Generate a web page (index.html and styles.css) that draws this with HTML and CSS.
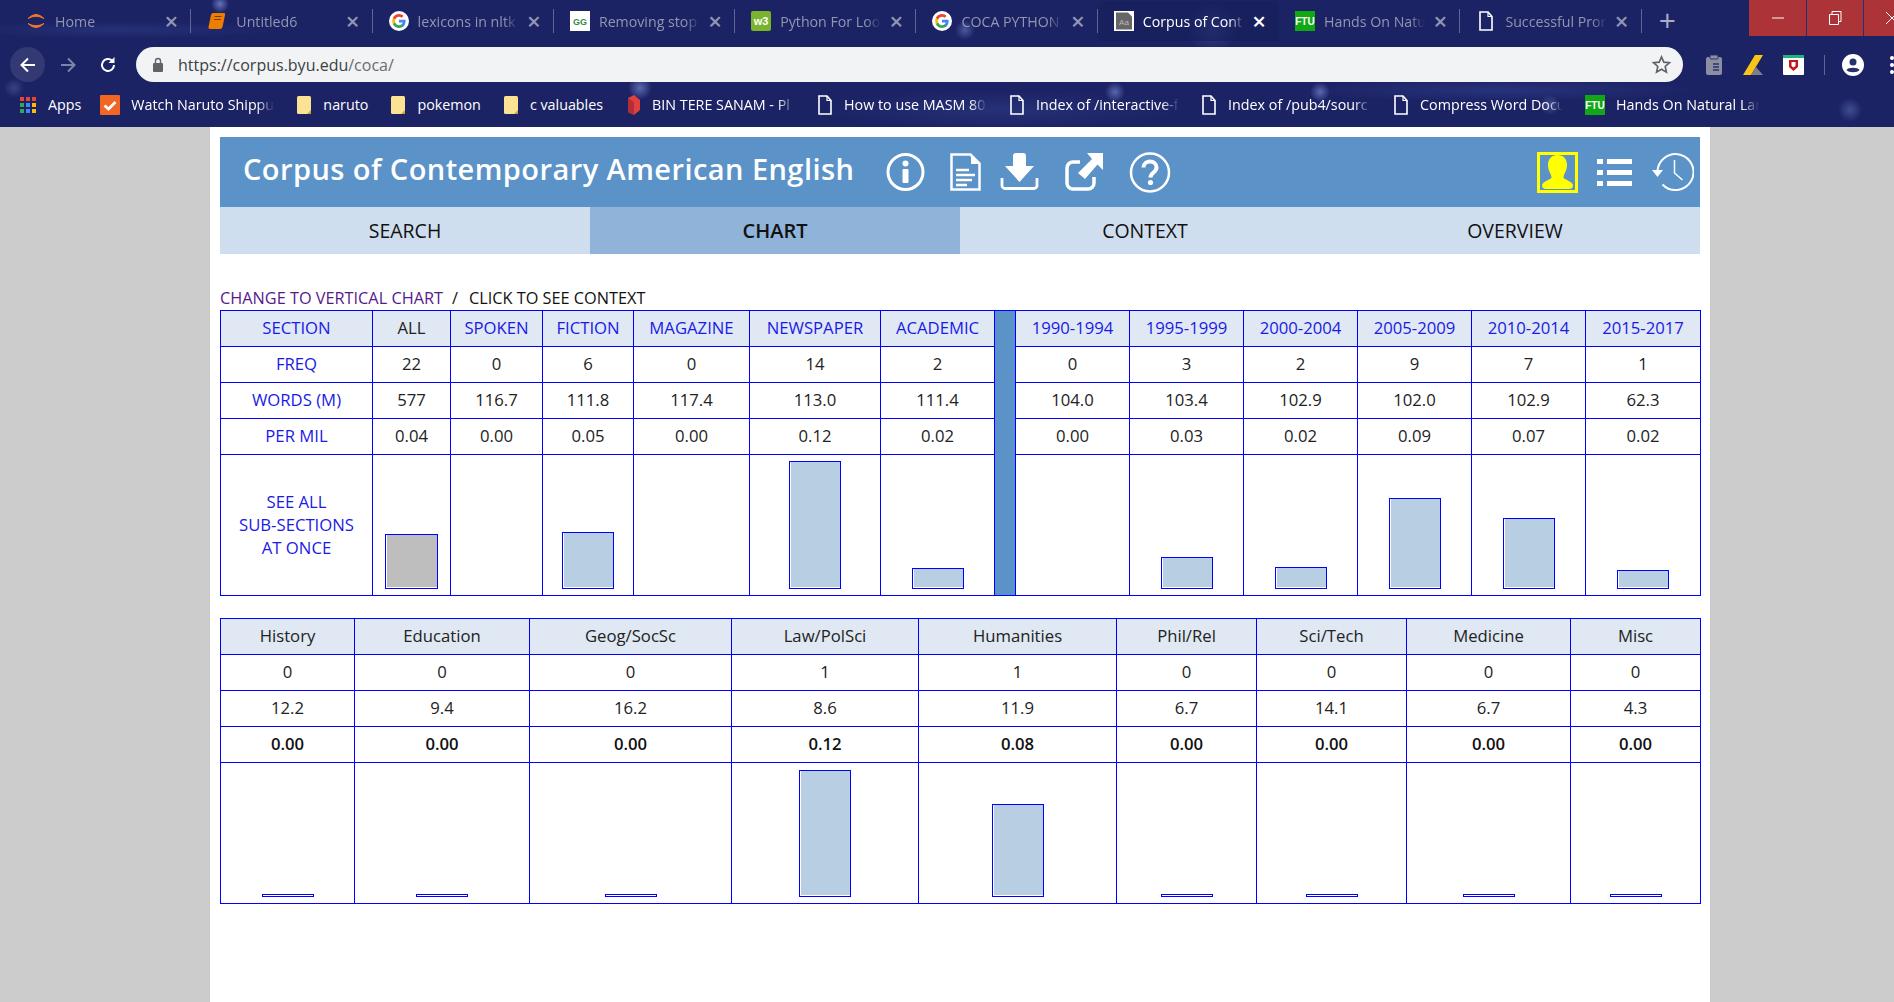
FILE: index.html
```html
<!DOCTYPE html>
<html lang="en">
<head>
    <meta charset="UTF-8">
    <title>Corpus of Contemporary American English</title>
    <link rel="stylesheet" href="styles.css">
</head>
<body>
    <svg class="defs" width="0" height="0">
        <symbol id="fav-google" viewBox="0 0 20 20">
            <circle cx="10" cy="10" r="10" fill="#fff"/>
            <path d="M16.6 10.2c0-.5 0-1-.1-1.400H10v2.700h3.700c-.2.900-.6 1.600-1.400 2.100v1.800h2.200c1.300-1.200 2.100-3 2.100-5.200z" fill="#4285f4"/>
            <path d="M10 17c1.900 0 3.400-.6 4.500-1.700l-2.200-1.700c-.6.400-1.400.7-2.300.7-1.800 0-3.300-1.200-3.800-2.800H3.900v1.800C5 15.500 7.300 17 10 17z" fill="#34a853"/>
            <path d="M6.200 11.500c-.3-.9-.3-1.900 0-2.900V6.800H3.900c-.9 1.900-.9 4.100 0 6.500z" fill="#fbbc05"/>
            <path d="M10 5.800c1 0 1.900.3 2.600 1l1.900-1.900C13.400 3.700 11.800 3 10 3 7.300 3 5 4.500 3.900 6.800l2.300 1.800C6.700 7 8.200 5.800 10 5.800z" fill="#ea4335"/>
        </symbol>
        <symbol id="fav-page" viewBox="0 0 16 20">
            <path d="M2 1h8l4 4.500V19H2z" fill="none" stroke="#fff" stroke-width="1.600"/>
            <path d="M10 1v4.500h4" fill="none" stroke="#fff" stroke-width="1.200"/>
        </symbol>
        <symbol id="fav-folder" viewBox="0 0 16 20">
            <rect x="1" y="1" width="14" height="18" rx="1.500" fill="#fde293"/>
            <path d="M11 19l4-4v4z" fill="#c9a53c"/>
        </symbol>
    </svg>

    <header class="chrome">
        <div class="tabstrip">
            <div class="tabs">
                <div class="tab">
                    <svg class="fav" viewBox="0 0 20 20"><path d="M2 7.500Q10 -.5 18 7.500Q10 3 2 7.500z" fill="#f37726" stroke="#f37726"/><path d="M2 12.500Q10 20.500 18 12.500Q10 17 2 12.500z" fill="#f37726" stroke="#f37726"/></svg>
                    <span class="tab-title">Home</span><span class="tab-x">×</span>
                </div>
                <div class="tab">
                    <svg class="fav" viewBox="0 0 20 20"><path d="M6 2h11q1.500 0 1 2l-2.500 12q-.5 2-2.500 2H3q-2 0-1.500-2L4 4q.5-2 2-2z" fill="#ef7d00"/><path d="M7.500 5.500h7M7 8.500h7" stroke="#7a3b00" stroke-width="1"/></svg>
                    <span class="tab-title">Untitled6</span><span class="tab-x">×</span>
                </div>
                <div class="tab">
                    <svg class="fav"><use href="#fav-google"/></svg>
                    <span class="tab-title">lexicons in nltk</span><span class="tab-x">×</span>
                </div>
                <div class="tab">
                    <svg class="fav" viewBox="0 0 20 20"><rect width="20" height="20" fill="#fff"/><text x="10" y="13.500" text-anchor="middle" font-family="Liberation Sans" font-size="9" font-weight="700" fill="#2f8d46">GG</text></svg>
                    <span class="tab-title">Removing stop</span><span class="tab-x">×</span>
                </div>
                <div class="tab">
                    <svg class="fav" viewBox="0 0 20 20"><rect width="20" height="20" rx="2" fill="#7cb32d"/><text x="10" y="14" text-anchor="middle" font-family="Liberation Sans" font-size="11" font-weight="700" fill="#fff">w3</text></svg>
                    <span class="tab-title">Python For Loo</span><span class="tab-x">×</span>
                </div>
                <div class="tab">
                    <svg class="fav"><use href="#fav-google"/></svg>
                    <span class="tab-title">COCA PYTHON</span><span class="tab-x">×</span>
                </div>
                <div class="tab tab-active">
                    <svg class="fav" viewBox="0 0 20 20"><rect width="20" height="20" fill="#fff"/><path d="M2 1.500h12l4 4v13H2z" fill="#666"/><text x="10" y="14" text-anchor="middle" font-family="Liberation Sans" font-size="8" fill="#bbb">Aa</text></svg>
                    <span class="tab-title">Corpus of Cont</span><span class="tab-x">×</span>
                </div>
                <div class="tab">
                    <svg class="fav" viewBox="0 0 20 20"><rect width="20" height="20" fill="#12a815"/><text x="10" y="14" text-anchor="middle" font-family="Liberation Sans" font-size="10" font-weight="700" fill="#fff">FTU</text></svg>
                    <span class="tab-title">Hands On Natu</span><span class="tab-x">×</span>
                </div>
                <div class="tab">
                    <svg class="fav"><use href="#fav-page"/></svg>
                    <span class="tab-title">Successful Pror</span><span class="tab-x">×</span>
                </div>
                <span class="new-tab">+</span>
            </div>
            <div class="window-btns">
                <div class="win-btn"><svg width="12" height="12" viewBox="0 0 12 12"><path d="M0 6h12" stroke="#fff"/></svg></div>
                <div class="win-btn"><svg width="14" height="14" viewBox="0 0 14 14"><path d="M1.500 3.500h9v10h-9zM4 3.500V.5h9v10h-2.500" fill="none" stroke="#fff"/></svg></div>
                <div class="win-btn"><svg width="14" height="14" viewBox="0 0 14 14"><path d="M1 1l12 12M13 1L1 13" stroke="#fff"/></svg></div>
            </div>
        </div>

        <div class="toolbar">
            <div class="tool-btn tool-hover"><svg width="18" height="18" viewBox="0 0 18 18"><path d="M16 9H3M9 2.500L2.500 9 9 15.500" fill="none" stroke="#fff" stroke-width="2"/></svg></div>
            <div class="tool-btn"><svg width="18" height="18" viewBox="0 0 18 18"><path d="M2 9h13M9 2.500L15.500 9 9 15.500" fill="none" stroke="#7d84a8" stroke-width="2"/></svg></div>
            <div class="tool-btn"><svg width="18" height="18" viewBox="0 0 18 18"><path d="M15 9a6 6 0 1 1-1.800-4.300" fill="none" stroke="#fff" stroke-width="2"/><path d="M15.500 1v6h-6z" fill="#fff"/></svg></div>
            <div class="url-bar">
                <svg class="lock" width="12" height="15" viewBox="0 0 12 15"><rect x="1" y="6" width="10" height="9" rx="1" fill="#5f6368"/><path d="M3.500 6V4a2.500 2.500 0 0 1 5 0v2" fill="none" stroke="#5f6368" stroke-width="1.400"/></svg>
                <span class="url"><span class="url-host">https://corpus.byu.edu</span>/coca/</span>
                <svg class="star" width="19" height="19" viewBox="0 0 20 20"><path d="M10 2l2.400 5.500 6 .6-4.500 4 1.300 5.900L10 15l-5.200 3 1.300-5.900-4.500-4 6-.6z" fill="none" stroke="#5f6368" stroke-width="1.700"/></svg>
            </div>
            <div class="ext-icons">
                <svg width="18" height="22" viewBox="0 0 18 22"><rect x="1" y="3" width="16" height="18" rx="2" fill="#8b8f9f"/><rect x="5" y="1" width="8" height="4" rx="1" fill="#8b8f9f" stroke="#2a3372"/><path d="M8 10h6M8 13h6M8 16h6" stroke="#2a3372" stroke-width="1.500"/></svg>
                <svg width="20" height="20" viewBox="0 0 20 20"><path d="M0 20L12 0h8L8 20z" fill="#fbc518"/><path d="M8 20l5-8 7 8z" fill="#7d8088"/></svg>
                <svg width="21" height="20" viewBox="0 0 21 20"><rect width="21" height="20" rx="1" fill="#fff"/><rect width="21" height="3" fill="#1db47e"/><path d="M6 5h9v7l-4.500 4L6 12z" fill="#c01818"/><path d="M8.500 7h4v4l-2 1.500-2-1.500z" fill="#fff"/></svg>
                <span class="ext-sep"></span>
                <svg class="profile" width="22" height="22" viewBox="0 0 22 22"><circle cx="11" cy="11" r="11" fill="#fff"/><circle cx="11" cy="8" r="3.500" fill="#26306f"/><path d="M4.500 16c1.500-3 11.500-3 13 0-2 3-11 3-13 0z" fill="#26306f"/></svg>
                <svg class="dots" width="4" height="18" viewBox="0 0 4 18"><circle cx="2" cy="2" r="2" fill="#fff"/><circle cx="2" cy="9" r="2" fill="#fff"/><circle cx="2" cy="16" r="2" fill="#fff"/></svg>
            </div>
        </div>

        <div class="bookmarks">
            <div class="bm bm-apps">
                <svg class="bm-icon" viewBox="0 0 16 16">
                    <rect x="0" y="0" width="4" height="4" fill="#ea4335"/><rect x="6" y="0" width="4" height="4" fill="#ea4335"/><rect x="12" y="0" width="4" height="4" fill="#ea4335"/>
                    <rect x="0" y="6" width="4" height="4" fill="#34a853"/><rect x="6" y="6" width="4" height="4" fill="#4285f4"/><rect x="12" y="6" width="4" height="4" fill="#fbbc05"/>
                    <rect x="0" y="12" width="4" height="4" fill="#34a853"/><rect x="6" y="12" width="4" height="4" fill="#4285f4"/><rect x="12" y="12" width="4" height="4" fill="#fbbc05"/>
                </svg>
                <span>Apps</span>
            </div>
            <div class="bm">
                <svg class="bm-icon bm-wide" viewBox="0 0 20 20"><rect width="20" height="20" rx="1" fill="#f26522"/><path d="M4.500 10.500l4 3.500 7-7" fill="none" stroke="#fff" stroke-width="2.800"/></svg>
                <span class="bm-cut">Watch Naruto Shippu</span>
            </div>
            <div class="bm"><svg class="bm-icon"><use href="#fav-folder"/></svg><span>naruto</span></div>
            <div class="bm"><svg class="bm-icon"><use href="#fav-folder"/></svg><span>pokemon</span></div>
            <div class="bm"><svg class="bm-icon"><use href="#fav-folder"/></svg><span>c valuables</span></div>
            <div class="bm">
                <svg class="bm-icon" viewBox="0 0 16 20"><path d="M3 3l6-3 6 5v10l-6 5-6-3z" fill="#e2403f"/><path d="M3 3l6 4v13l-6-3z" fill="#b22f38"/></svg>
                <span class="bm-cut">BIN TERE SANAM - Pl</span>
            </div>
            <div class="bm"><svg class="bm-icon"><use href="#fav-page"/></svg><span class="bm-cut">How to use MASM 80</span></div>
            <div class="bm"><svg class="bm-icon"><use href="#fav-page"/></svg><span class="bm-cut">Index of /interactive-f</span></div>
            <div class="bm"><svg class="bm-icon"><use href="#fav-page"/></svg><span class="bm-cut">Index of /pub4/sourc</span></div>
            <div class="bm"><svg class="bm-icon"><use href="#fav-page"/></svg><span class="bm-cut">Compress Word Docu</span></div>
            <div class="bm">
                <svg class="bm-icon bm-wide" viewBox="0 0 20 20"><rect width="20" height="20" fill="#12a815"/><text x="10" y="14" text-anchor="middle" font-family="Liberation Sans" font-size="10" font-weight="700" fill="#fff">FTU</text></svg>
                <span class="bm-cut">Hands On Natural Lan</span>
            </div>
        </div>
    </header>

    <main class="page">
        <div class="site-header">
            <h1>Corpus of Contemporary American English</h1>
            <div class="header-icons">
                <!-- info -->
                <svg class="ico-info" width="39" height="40" viewBox="0 0 39 40"><circle cx="19.500" cy="20" r="17.500" fill="none" stroke="#fff" stroke-width="3"/><circle cx="19.500" cy="11.500" r="3" fill="#fff"/><rect x="16.500" y="17" width="6" height="14" rx="1" fill="#fff"/></svg>
                <!-- document -->
                <svg class="ico-doc" width="31" height="38" viewBox="0 0 31 38"><path d="M1.500 1.500h19l9 9v26h-28z" fill="none" stroke="#fff" stroke-width="2.500"/><path d="M21 3v8h8z" fill="#fff"/><path d="M6 17h13M6 22h19M6 27h16M6 32h11" stroke="#fff" stroke-width="2.500"/></svg>
                <!-- download -->
                <svg class="ico-down" width="39" height="38" viewBox="0 0 39 38"><path d="M13 3a3 3 0 0 1 3-3h7a3 3 0 0 1 3 3v10h8L19.500 29 5 13h8z" fill="#fff"/><path d="M2 25v7.500a3 3 0 0 0 3 3h29a3 3 0 0 0 3-3V25" fill="none" stroke="#fff" stroke-width="2.800"/></svg>
                <!-- share -->
                <svg class="ico-share" width="38" height="38" viewBox="0 0 38 38"><path d="M15 9H8a6 6 0 0 0-6 6v15a6 6 0 0 0 6 6h15a6 6 0 0 0 6-6v-6" fill="none" stroke="#fff" stroke-width="3.500"/><path d="M22 0h16v17l-5.500-5.500L20 26l-7-6 14-14z" fill="#fff"/></svg>
                <!-- help -->
                <svg class="ico-help" width="42" height="41" viewBox="0 0 42 41"><circle cx="21" cy="20.500" r="19" fill="none" stroke="#fff" stroke-width="2.500"/><path d="M14.500 15.500c0-8 13-8 13 0 0 5-6 5-6 10" fill="none" stroke="#fff" stroke-width="4"/><circle cx="21.500" cy="30.500" r="2.600" fill="#fff"/></svg>
            </div>
            <div class="header-icons-right">
                <!-- user, highlighted -->
                <div class="ico-user">
                    <svg width="35" height="35" viewBox="0 0 35 35"><path d="M17.500 0c6 0 9.500 4 9.500 10 0 6-3.500 9-3.500 12.500 0 2 9.500 3.500 9.500 8.500 0 2-2 3-4 3H6c-2 0-4-1-4-3 0-5 9.500-6.500 9.500-8.500C11.500 19 8 16 8 10 8 4 11.500 0 17.500 0z" fill="#ff0"/></svg>
                </div>
                <!-- list -->
                <svg class="ico-list" width="35" height="27" viewBox="0 0 35 27"><path d="M0 0h6v5H0zM10 0h25v5H10zM0 11h6v5H0zM10 11h25v5H10zM0 22h6v5H0zM10 22h25v5H10z" fill="#fff"/></svg>
                <!-- history -->
                <svg class="ico-history" width="42" height="40" viewBox="0 0 42 40"><path d="M5.500 20a18 18 0 1 1 5 12.500" fill="none" stroke="#fff" stroke-width="2"/><path d="M0 18h11l-5.500 7z" fill="#fff"/><path d="M22.500 8v13l8 7" fill="none" stroke="#fff" stroke-width="1.500"/></svg>
            </div>
        </div>

        <nav class="tabs-nav">
            <a class="nav-item">SEARCH</a>
            <a class="nav-item nav-active">CHART</a>
            <a class="nav-item">CONTEXT</a>
            <a class="nav-item">OVERVIEW</a>
        </nav>

        <div class="chart-links">
            <a class="visited">CHANGE TO VERTICAL CHART</a><span class="slash">/</span><span>CLICK TO SEE CONTEXT</span>
        </div>

        <table class="chart chart-main">
            <colgroup>
                <col class="c152"><col class="c78"><col class="c92"><col class="c91"><col class="c116"><col class="c131"><col class="c114"><col class="c21"><col class="c114"><col class="c114"><col class="c114"><col class="c114"><col class="c114"><col class="c115">
            </colgroup>
            <tr class="head link-row">
                <td>SECTION</td><td class="plain">ALL</td><td>SPOKEN</td><td>FICTION</td><td>MAGAZINE</td><td>NEWSPAPER</td><td>ACADEMIC</td><td class="divider" rowspan="5"></td><td>1990-1994</td><td>1995-1999</td><td>2000-2004</td><td>2005-2009</td><td>2010-2014</td><td>2015-2017</td>
            </tr>
            <tr>
                <td class="label">FREQ</td><td>22</td><td>0</td><td>6</td><td>0</td><td>14</td><td>2</td><td>0</td><td>3</td><td>2</td><td>9</td><td>7</td><td>1</td>
            </tr>
            <tr>
                <td class="label">WORDS (M)</td><td>577</td><td>116.7</td><td>111.8</td><td>117.4</td><td>113.0</td><td>111.4</td><td>104.0</td><td>103.4</td><td>102.9</td><td>102.0</td><td>102.9</td><td>62.3</td>
            </tr>
            <tr>
                <td class="label">PER MIL</td><td>0.04</td><td>0.00</td><td>0.05</td><td>0.00</td><td>0.12</td><td>0.02</td><td>0.00</td><td>0.03</td><td>0.02</td><td>0.09</td><td>0.07</td><td>0.02</td>
            </tr>
            <tr class="bars">
                <td class="label see-all">SEE ALL<br>SUB-SECTIONS<br>AT ONCE</td>
                <td><div class="bar bar-grey" style="height: 55px"></div></td>
                <td></td>
                <td><div class="bar" style="height: 57px"></div></td>
                <td></td>
                <td><div class="bar" style="height: 128px"></div></td>
                <td><div class="bar" style="height: 21px"></div></td>
                <td></td>
                <td><div class="bar" style="height: 32px"></div></td>
                <td><div class="bar" style="height: 22px"></div></td>
                <td><div class="bar" style="height: 91px"></div></td>
                <td><div class="bar" style="height: 71px"></div></td>
                <td><div class="bar" style="height: 19px"></div></td>
            </tr>
        </table>

        <table class="chart chart-sub">
            <colgroup>
                <col class="c134"><col class="c175"><col class="c202"><col class="c187"><col class="c198"><col class="c140"><col class="c150"><col class="c164"><col class="c130">
            </colgroup>
            <tr class="head">
                <td>History</td><td>Education</td><td>Geog/SocSc</td><td>Law/PolSci</td><td>Humanities</td><td>Phil/Rel</td><td>Sci/Tech</td><td>Medicine</td><td>Misc</td>
            </tr>
            <tr>
                <td>0</td><td>0</td><td>0</td><td>1</td><td>1</td><td>0</td><td>0</td><td>0</td><td>0</td>
            </tr>
            <tr>
                <td>12.2</td><td>9.4</td><td>16.2</td><td>8.6</td><td>11.9</td><td>6.7</td><td>14.1</td><td>6.7</td><td>4.3</td>
            </tr>
            <tr class="strong">
                <td>0.00</td><td>0.00</td><td>0.00</td><td>0.12</td><td>0.08</td><td>0.00</td><td>0.00</td><td>0.00</td><td>0.00</td>
            </tr>
            <tr class="bars">
                <td><div class="bar" style="height: 3px"></div></td>
                <td><div class="bar" style="height: 3px"></div></td>
                <td><div class="bar" style="height: 3px"></div></td>
                <td><div class="bar" style="height: 127px"></div></td>
                <td><div class="bar" style="height: 93px"></div></td>
                <td><div class="bar" style="height: 3px"></div></td>
                <td><div class="bar" style="height: 3px"></div></td>
                <td><div class="bar" style="height: 3px"></div></td>
                <td><div class="bar" style="height: 3px"></div></td>
            </tr>
        </table>
    </main>
</body>
</html>
```

FILE: styles.css
```css
* {
    box-sizing: border-box;
}

html, body {
    height: 100%;
}

body {
    margin: 0;
    background: #cccccc;
    font-family: "Open Sans", sans-serif;
    overflow: hidden;
    display: flex;
    flex-direction: column;
}

.defs {
    display: block;
    height: 0;
}

/* Browser frame, a dark theme with a blotchy picture */
.chrome {
    height: 127px;
    flex: none;
    color: #fff;
    background-color: #1c2364;
    background-image:
        radial-gradient(circle at 220px 4px, rgba(130, 150, 225, 0.7), transparent 9px),
        radial-gradient(circle at 14px 88px, rgba(120, 140, 210, 0.3), transparent 10px),
        radial-gradient(circle at 640px 88px, rgba(130, 150, 225, 0.6), transparent 12px),
        radial-gradient(circle at 1115px 92px, rgba(130, 150, 225, 0.6), transparent 10px),
        radial-gradient(circle at 1320px 92px, rgba(130, 150, 225, 0.6), transparent 10px),
        radial-gradient(circle at 1550px 105px, rgba(120, 140, 210, 0.4), transparent 10px),
        radial-gradient(circle at 965px 30px, rgba(120, 140, 210, 0.5), transparent 10px),
        radial-gradient(circle at 1212px 28px, rgba(100, 120, 200, 0.35), transparent 26px),
        radial-gradient(circle at 1850px 110px, rgba(120, 140, 210, 0.4), transparent 12px),
        radial-gradient(ellipse at 500px 60px, rgba(60, 80, 165, 0.4), transparent 170px),
        radial-gradient(ellipse at 1500px 90px, rgba(60, 80, 165, 0.35), transparent 200px),
        radial-gradient(ellipse at 120px 30px, rgba(60, 80, 165, 0.3), transparent 160px),
        radial-gradient(ellipse at 1000px 110px, rgba(60, 80, 165, 0.3), transparent 180px);
}

.tabstrip {
    height: 47px;
    display: flex;
    justify-content: space-between;
    align-items: flex-start;
    padding-left: 10px;
}

.tabs {
    display: flex;
    align-items: flex-start;
    padding-top: 1px;
}

.tab {
    width: 181.3px;
    height: 40px;
    display: flex;
    align-items: center;
    padding: 0 10px 0 16px;
    font-size: 14.2px;
    color: #9296b0;
    position: relative;
}

.tab::after {
    content: "";
    position: absolute;
    right: 0;
    top: 8px;
    height: 24px;
    width: 1px;
    background: rgba(255, 255, 255, 0.3);
}

.tab-active {
    color: #fff;
    background: rgba(24, 30, 90, 0.6);
    border-radius: 8px 8px 0 0;
}

.tab-active::after {
    display: none;
}

.fav {
    width: 20px;
    height: 20px;
    flex: none;
    margin-right: 9px;
}

.tab-title {
    flex: 1;
    white-space: nowrap;
    overflow: hidden;
    -webkit-mask-image: linear-gradient(to right, #000 85%, transparent);
    mask-image: linear-gradient(to right, #000 85%, transparent);
}

.tab-x {
    width: 20px;
    flex: none;
    text-align: center;
    font-size: 24px;
    font-weight: 600;
    line-height: 20px;
    margin-left: 5px;
}

.new-tab {
    font-size: 30px;
    line-height: 38px;
    color: #a8adc9;
    margin-left: 17px;
}

.window-btns {
    display: flex;
    flex: none;
    height: 36px;
    margin-right: -26px;
}

.win-btn {
    width: 57px;
    height: 36px;
    display: flex;
    align-items: center;
    justify-content: center;
    background: #ac3337;
    border-left: 1px solid #27306f;
}

.win-btn:first-child {
    border-left: none;
}

.toolbar {
    height: 35px;
    display: flex;
    align-items: center;
    padding-left: 10px;
}

.tool-btn {
    width: 35px;
    height: 35px;
    flex: none;
    margin-right: 5px;
    border-radius: 50%;
    display: flex;
    align-items: center;
    justify-content: center;
}

.tool-hover {
    background: rgba(255, 255, 255, 0.1);
}

.url-bar {
    width: 1547px;
    height: 35px;
    flex: none;
    margin-left: 6px;
    border-radius: 18px;
    background: #f1f3f4;
    display: flex;
    align-items: center;
    padding: 0 12px 0 16px;
}

.lock {
    flex: none;
}

.url {
    flex: 1;
    margin-left: 14px;
    font-size: 16px;
    color: #6a6d70;
}

.url-host {
    color: #3c4043;
}

.ext-icons {
    display: flex;
    align-items: center;
    margin-left: 22px;
    gap: 20px;
}

.ext-icons svg {
    flex: none;
}

.ext-sep {
    width: 1px;
    height: 20px;
    flex: none;
    background: rgba(255, 255, 255, 0.3);
}

.profile {
    margin-left: -3px;
}

.dots {
    margin-left: 6px;
}

.bookmarks {
    height: 45px;
    display: flex;
    align-items: center;
    padding-left: 20px;
    gap: 22px;
    font-size: 14.3px;
    white-space: nowrap;
}

.bm {
    display: flex;
    align-items: center;
    flex: none;
}

.bm-icon {
    width: 16px;
    height: 20px;
    margin-right: 11px;
    flex: none;
}

.bm-apps {
    margin-right: -3px;
}

.bm-apps .bm-icon {
    height: 16px;
    margin-right: 12px;
}

.bm-wide {
    width: 20px;
}

.bm-cut {
    width: 143px;
    overflow: hidden;
    -webkit-mask-image: linear-gradient(to right, #000 88%, transparent);
    mask-image: linear-gradient(to right, #000 88%, transparent);
}

/* Page */
.page {
    flex: 1;
    width: 1500px;
    margin-left: 210px;
    padding: 10px 10px 0;
    background: #fff;
}

.site-header {
    height: 70px;
    background: #5b92c8;
    display: flex;
    align-items: center;
    padding-left: 23px;
    color: #fff;
}

h1 {
    margin: 0 0 8px;
    width: 643px;
    font-size: 29px;
    font-weight: 600;
    letter-spacing: 0.44px;
    white-space: nowrap;
}

.header-icons {
    display: flex;
    align-items: center;
}

.ico-doc {
    margin-left: 25px;
}

.ico-down {
    margin-left: 19px;
}

.ico-share {
    margin-left: 26px;
}

.ico-help {
    margin-left: 26px;
}

.header-icons-right {
    margin-left: auto;
    display: flex;
    align-items: center;
    padding-right: 6px;
}

.ico-user {
    width: 41px;
    height: 41px;
    border: 3px solid #ff0;
    margin-right: 19px;
}

.ico-user svg {
    display: block;
    margin: 0 auto;
}

.ico-list {
    margin-right: 20px;
}

.tabs-nav {
    height: 47px;
    display: grid;
    grid-template-columns: repeat(4, 1fr);
    background: #cfdeee;
}

.nav-item {
    display: flex;
    align-items: center;
    justify-content: center;
    font-size: 19.5px;
    color: #111;
}

.nav-active {
    background: #8fb3d9;
    font-size: 20px;
    font-weight: 600;
}

.chart-links {
    margin-top: 33px;
    height: 23px;
    line-height: 22px;
    font-size: 16.3px;
    color: #111;
}

.visited {
    color: #551a8b;
}

.slash {
    margin: 0 11px 0 9px;
}

.chart {
    width: 1480px;
    table-layout: fixed;
    border-collapse: collapse;
    font-size: 16.7px;
    color: #222;
    text-align: center;
}

.chart td {
    border: 1px solid #0000ff;
    height: 36px;
    padding: 0 0 2px;
}

.chart-sub {
    margin-top: 22px;
}

.head td {
    background: #dfe8f3;
}

.link-row td {
    color: #1a1ae6;
}

.link-row td.plain {
    color: #222;
}

.label {
    color: #1a1ae6;
}

.chart .divider {
    background: #5b92c8;
}

.strong td {
    font-weight: 600;
    color: #111;
}

.chart .bars td {
    height: 141px;
    vertical-align: bottom;
    padding-bottom: 6px;
}

.chart .bars .see-all {
    vertical-align: middle;
    line-height: 23px;
    padding-bottom: 2px;
}

.bar {
    width: 52px;
    margin: 0 auto;
    background: #b8cee3;
    border: 1px solid #0000ff;
    box-shadow: inset 1px -1px 0 #fff;
}

.bar-grey {
    width: 53px;
    background: #bebebe;
}

.c152 { width: 152px; }
.c78 { width: 78px; }
.c92 { width: 92px; }
.c91 { width: 91px; }
.c116 { width: 116px; }
.c131 { width: 131px; }
.c114 { width: 114px; }
.c21 { width: 21px; }
.c115 { width: 115px; }
.c134 { width: 134px; }
.c175 { width: 175px; }
.c202 { width: 202px; }
.c187 { width: 187px; }
.c198 { width: 198px; }
.c140 { width: 140px; }
.c150 { width: 150px; }
.c164 { width: 164px; }
.c130 { width: 130px; }
```
